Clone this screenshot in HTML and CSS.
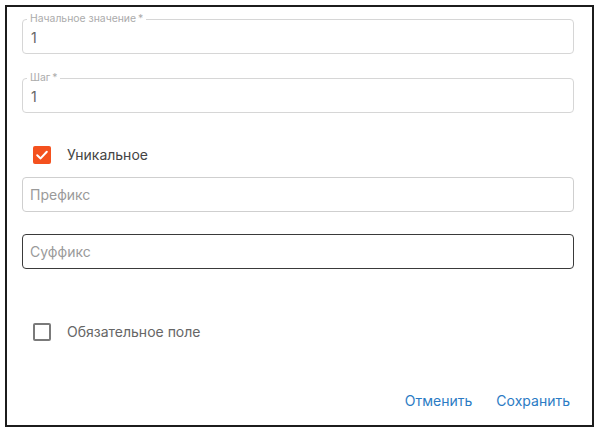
FILE: index.html
```html
<!DOCTYPE html>
<html lang="ru">
<head>
<meta charset="utf-8">
<link rel="stylesheet" href="styles.css">
</head>
<body>
<div class="dialog">
  <fieldset class="field field-first">
    <legend class="field-label">Начальное значение&thinsp;*</legend>
    <input class="field-input" type="text" value="1">
  </fieldset>
  <fieldset class="field field-second">
    <legend class="field-label">Шаг&thinsp;*</legend>
    <input class="field-input" type="text" value="1">
  </fieldset>
  <label class="check-row check-unique">
    <span class="box box-checked">
      <svg viewBox="0 0 18 18" width="18" height="18"><path d="M4.2 9.2 L7.6 12.4 L13.8 5.8" fill="none" stroke="#fff" stroke-width="2" stroke-linecap="round" stroke-linejoin="round"/></svg>
    </span>
    <span class="check-text text-dark">Уникальное</span>
  </label>
  <div class="plain-field prefix">
    <input class="plain-input" type="text" placeholder="Префикс">
  </div>
  <div class="plain-field suffix focused">
    <input class="plain-input" type="text" placeholder="Суффикс">
  </div>
  <label class="check-row check-required">
    <span class="box box-empty"></span>
    <span class="check-text text-light">Обязательное поле</span>
  </label>
  <div class="actions">
    <button class="btn" type="button">Отменить</button>
    <button class="btn" type="button">Сохранить</button>
  </div>
</div>
</body>
</html>
```

FILE: styles.css
```css
html, body {
  margin: 0;
  padding: 0;
  background: #fff;
}
body {
  font-family: Inter, Roboto, "Noto Sans", sans-serif;
}
.dialog {
  margin: 5px 0 0 5px;
  width: 589px;
  height: 422px;
  box-sizing: border-box;
  border: 2px solid #1c1c1c;
  padding: 7px 18px 0 15px;
  display: flex;
  flex-direction: column;
}
.field {
  margin: 0;
  padding: 0 0 0 4px;
  border: 1px solid #d6d6d6;
  border-radius: 4px;
  min-width: 0;
}
.field-second {
  margin-top: 19px;
}
.field-label {
  padding: 0 3px;
  font-size: 10.4px;
  line-height: 10px;
  color: #ababab;
}
.field-input {
  display: block;
  width: 100%;
  box-sizing: border-box;
  height: 29px;
  border: 0;
  outline: 0;
  padding: 0 0 3px 4px;
  margin: 0;
  font-family: Inter, Roboto, sans-serif;
  font-size: 14px;
  color: #666;
  background: transparent;
}
.check-row {
  display: flex;
  align-items: center;
  height: 18px;
  padding-left: 11px;
  gap: 16px;
}
.check-unique {
  margin-top: 33px;
}
.check-required {
  margin-top: 54px;
}
.box {
  width: 18px;
  height: 18px;
  box-sizing: border-box;
  border-radius: 2px;
  flex: none;
  display: block;
}
.box svg {
  display: block;
}
.box-checked {
  background: #f4511e;
}
.box-empty {
  border: 2px solid #7a7a7a;
}
.check-text {
  font-size: 14px;
  margin-top: -2px;
}
.text-dark {
  color: #444;
}
.text-light {
  color: #666;
}
.plain-field {
  height: 35px;
  box-sizing: border-box;
  border: 1px solid #cfcfcf;
  border-radius: 4px;
  display: flex;
}
.prefix {
  margin-top: 13px;
}
.suffix {
  margin-top: 22px;
}
.focused {
  border-color: #3a3a3a;
}
.plain-input {
  flex: 1;
  min-width: 0;
  border: 0;
  outline: 0;
  background: transparent;
  padding: 0 0 0 7px;
  margin: 0;
  font-family: Inter, Roboto, sans-serif;
  font-size: 14px;
  color: #333;
}
.plain-input::placeholder {
  color: #9a9a9a;
}
.actions {
  margin-top: 44px;
  display: flex;
  justify-content: flex-end;
  gap: 16px;
}
.btn {
  height: 30px;
  padding: 0 4px;
  border: 0;
  background: transparent;
  font-family: Inter, Roboto, sans-serif;
  font-size: 14px;
  color: #2b7bc4;
  cursor: pointer;
}
```
